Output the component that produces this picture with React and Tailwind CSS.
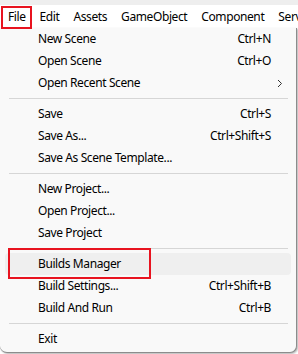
import React from 'react';

const menuBar = ['File', 'Edit', 'Assets', 'GameObject', 'Component', 'Services'];

const items = [
  { label: 'New Scene', key: 'Ctrl+N' },
  { label: 'Open Scene', key: 'Ctrl+O' },
  { label: 'Open Recent Scene', sub: true },
  { sep: true },
  { label: 'Save', key: 'Ctrl+S' },
  { label: 'Save As...', key: 'Ctrl+Shift+S' },
  { label: 'Save As Scene Template...' },
  { sep: true },
  { label: 'New Project...' },
  { label: 'Open Project...' },
  { label: 'Save Project' },
  { sep: true },
  { label: 'Builds Manager', active: true },
  { label: 'Build Settings...', key: 'Ctrl+Shift+B' },
  { label: 'Build And Run', key: 'Ctrl+B' },
  { sep: true },
  { label: 'Exit' },
];

const MenuRow = ({ item }) => {
  if (item.sep) {
    return (
      <div className="h-[9px] flex items-center pl-[9px] pr-[8px]">
        <div className="h-px w-full bg-[#d6d6d6]" />
      </div>
    );
  }
  return (
    <div className="relative h-[22px] px-[5px]">
      <div className={`h-full flex items-center pl-[33px] pr-[20px] rounded-[4px] ${item.active ? 'bg-[#efefef]' : ''}`}>
        <span className="flex-1">{item.label}</span>
        {item.key && <span>{item.key}</span>}
        {item.sub && (
          <svg width="6" height="9" viewBox="0 0 6 9" className="mr-[-12px]">
            <path d="M1 1 L4.5 4.5 L1 8" fill="none" stroke="#333" strokeWidth="1" />
          </svg>
        )}
      </div>
      {item.active && (
        <div className="absolute left-[8px] top-[-5px] w-[143px] h-[31px] border-[2.5px] border-[#e8131f]" />
      )}
    </div>
  );
};

export default function App() {
  return (
    <div
      className="w-[298px] h-[354px] overflow-hidden bg-white text-[12px] tracking-[-0.4px] text-black"
      style={{ fontFamily: '"Segoe UI", "Noto Sans", sans-serif' }}
    >
      {/* title bar remnant */}
      <div className="h-[5px] bg-[#eeeeee]" />
      {/* menu bar */}
      <div className="relative h-[23px] flex items-center whitespace-nowrap">
        {menuBar.map((m, i) => (
          <span key={m} className={`${i === 0 ? 'pl-[8px]' : 'pl-[14px]'} leading-[23px]`}>
            {m}
          </span>
        ))}
        <div className="absolute left-[1px] top-[1px] w-[31px] h-[23px] border-[2.5px] border-[#e8131f]" />
      </div>
      {/* dropdown */}
      <div className="w-[297px] h-[325px] bg-[#f9f9f9] border-r border-b border-[#8c8c8c] rounded-br-[7px] rounded-bl-[7px] shadow-[1px_1px_2px_rgba(0,0,0,0.3)]">
        {items.map((it, i) => (
          <MenuRow key={i} item={it} />
        ))}
      </div>
    </div>
  );
}
